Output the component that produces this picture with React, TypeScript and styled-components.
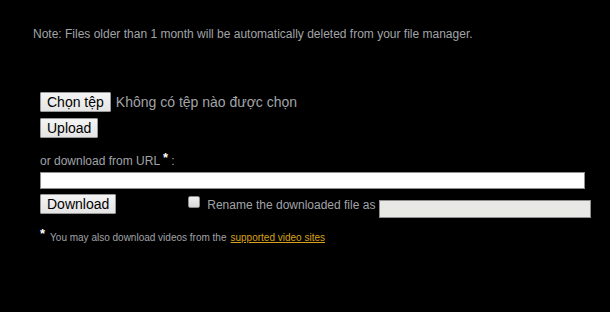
import styled, { createGlobalStyle } from 'styled-components'

const GlobalStyle = createGlobalStyle`
    html, body {
        margin: 0;
        padding: 0;
        background: #000000;
    }
    body {
        font-family: "Liberation Sans", Arial, sans-serif;
        width: 610px;
        height: 312px;
        overflow: hidden;
    }
`

function App() {
    return (
        <Page>
            <GlobalStyle />
            <Note>Note: Files older than 1 month will be automatically deleted from your file manager.</Note>
            <UploadForm>
                <FileRow>
                    <Button type="button">Chọn tệp</Button>
                    <FileStatus>Không có tệp nào được chọn</FileStatus>
                </FileRow>
                <Button type="button">Upload</Button>
                <UrlLabel>
                    or download from URL <Star>*</Star> :
                </UrlLabel>
                <UrlInput type="text" />
                <DownloadRow>
                    <Button type="button">Download</Button>
                    <RenameGroup>
                        <CheckBox />
                        <RenameText>Rename the downloaded file as</RenameText>
                        <RenameInput type="text" disabled />
                    </RenameGroup>
                </DownloadRow>
                <Footnote>
                    <Star>*</Star>
                    <FootText>You may also download videos from the</FootText>
                    <SitesLink href="#">supported video sites</SitesLink>
                </Footnote>
            </UploadForm>
        </Page>
    )
}

export default App

const Page = styled.div`
    width: 610px;
    height: 312px;
    background: #000000;
    color: #a0a4a8;
`

const Note = styled.div`
    padding: 27px 0 0 33px;
    font-size: 12px;
    line-height: 14px;
`

const UploadForm = styled.div`
    display: flex;
    flex-direction: column;
    align-items: flex-start;
    padding: 51px 0 0 40px;
`

const FileRow = styled.div`
    display: flex;
    align-items: center;
    gap: 5px;
    margin-bottom: 6px;
`

const Button = styled.button`
    height: 20px;
    padding: 0 6px;
    font-family: "Liberation Sans", Arial, sans-serif;
    font-size: 14px;
    line-height: 18px;
    color: #000000;
    background: linear-gradient(#f4f4f4, #e4e4e4);
    border: 1px solid #9a9a9a;
    border-radius: 1px;
    box-sizing: border-box;
`

const FileStatus = styled.span`
    font-size: 14px;
    line-height: 18px;
    color: #a0a4a8;
`

const UrlLabel = styled.div`
    margin-top: 16px;
    font-size: 12px;
    line-height: 14px;
`

const Star = styled.span`
    color: #ffffff;
    font-weight: bold;
    font-size: 13px;
    position: relative;
    top: -3px;
`

const UrlInput = styled.input`
    margin-top: 4px;
    width: 545px;
    height: 17px;
    box-sizing: border-box;
    border: 1px solid #8f8f8f;
    background: #ffffff;
    padding: 0 2px;
`

const DownloadRow = styled.div`
    display: flex;
    align-items: flex-start;
    margin-top: 5px;
    gap: 72px;
`

const RenameGroup = styled.div`
    display: flex;
    align-items: flex-start;
    padding-top: 2px;
`

const CheckBox = styled.span`
    width: 12px;
    height: 12px;
    box-sizing: border-box;
    border: 1px solid #8a8a8a;
    border-radius: 2px;
    background: linear-gradient(#f0f0f0, #d8d8d8);
`

const RenameText = styled.span`
    margin: 2px 4px 0 7px;
    font-size: 12px;
    line-height: 14px;
`

const RenameInput = styled.input`
    margin-top: 4px;
    width: 212px;
    height: 18px;
    box-sizing: border-box;
    border: 1px solid #8f8f8f;
    background: #e8e8e4;
`

const Footnote = styled.div`
    display: flex;
    align-items: baseline;
    margin-top: 12px;
    font-size: 10px;
    line-height: 14px;
`

const FootText = styled.span`
    margin-left: 5px;
`

const SitesLink = styled.a`
    margin-left: 4px;
    color: #d9a21b;
    text-decoration: underline;
`
